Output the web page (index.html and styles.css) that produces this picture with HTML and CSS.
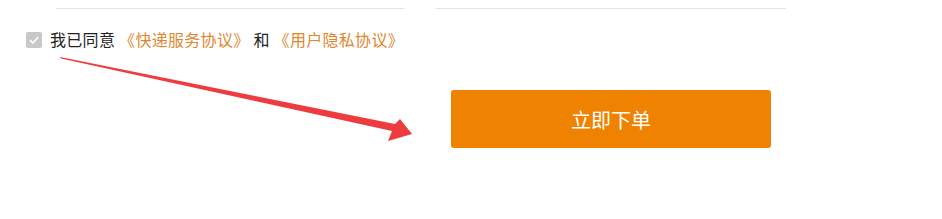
FILE: index.html
```html
<!DOCTYPE html>
<html>

<head>
    <meta charset="utf-8">
    <title>立即下单</title>
    <link rel="stylesheet" href="styles.css">
</head>

<body>
    <main class="order">
        <div class="fields">
            <div class="field field-left"></div>
            <div class="field field-right"></div>
        </div>
        <label class="agree">
            <span class="check">
                <svg viewBox="0 0 16 16" width="16" height="16">
                    <path d="M4 8.2 L7 11 L12.2 5.2" fill="none" stroke="#fff" stroke-width="1.6" />
                </svg>
            </span>
            <span class="agree-text">我已同意 <a href="#" class="link">《快递服务协议》</a> 和 <a href="#" class="link">《用户隐私协议》</a></span>
        </label>
        <div class="actions">
            <button class="submit">立即下单</button>
        </div>
        <svg class="arrow" width="942" height="219" viewBox="0 0 942 219">
            <polygon points="60,57 395,124 400,119 412,134 388,141 392,131 61,58.6" fill="#ee3b3f" />
        </svg>
    </main>
</body>

</html>
```

FILE: styles.css
```css
body {
    margin: 0;
    background: #fff;
    font-family: "Noto Sans CJK SC", "Noto Sans", sans-serif;
    color: #222;
}

.order {
    position: relative;
    height: 219px;
}

.fields {
    display: flex;
    padding-left: 56px;
    gap: 32px;
}

.field {
    height: 8px;
    border-bottom: 1px solid #e2e2e2;
}

.field-left {
    width: 348px;
}

.field-right {
    width: 350px;
}

.agree {
    display: flex;
    align-items: center;
    margin: 23px 0 0 26px;
    height: 16px;
    font-size: 16px;
    line-height: 16px;
}

.check {
    display: inline-flex;
    width: 16px;
    height: 16px;
    background: #c8c8c8;
    border-radius: 2px;
    margin-right: 8px;
}

.agree-text {
    white-space: pre;
    letter-spacing: 0.3px;
    margin-top: -2px;
}

.link {
    color: #e0872e;
    text-decoration: none;
}

.actions {
    padding: 42px 0 0 451px;
}

.submit {
    width: 320px;
    height: 58px;
    border: 0;
    border-radius: 3px;
    background: #ef8200;
    color: #fff;
    font-family: inherit;
    font-size: 20px;
    cursor: pointer;
}

.arrow {
    position: absolute;
    left: 0;
    top: 0;
    pointer-events: none;
}
```
